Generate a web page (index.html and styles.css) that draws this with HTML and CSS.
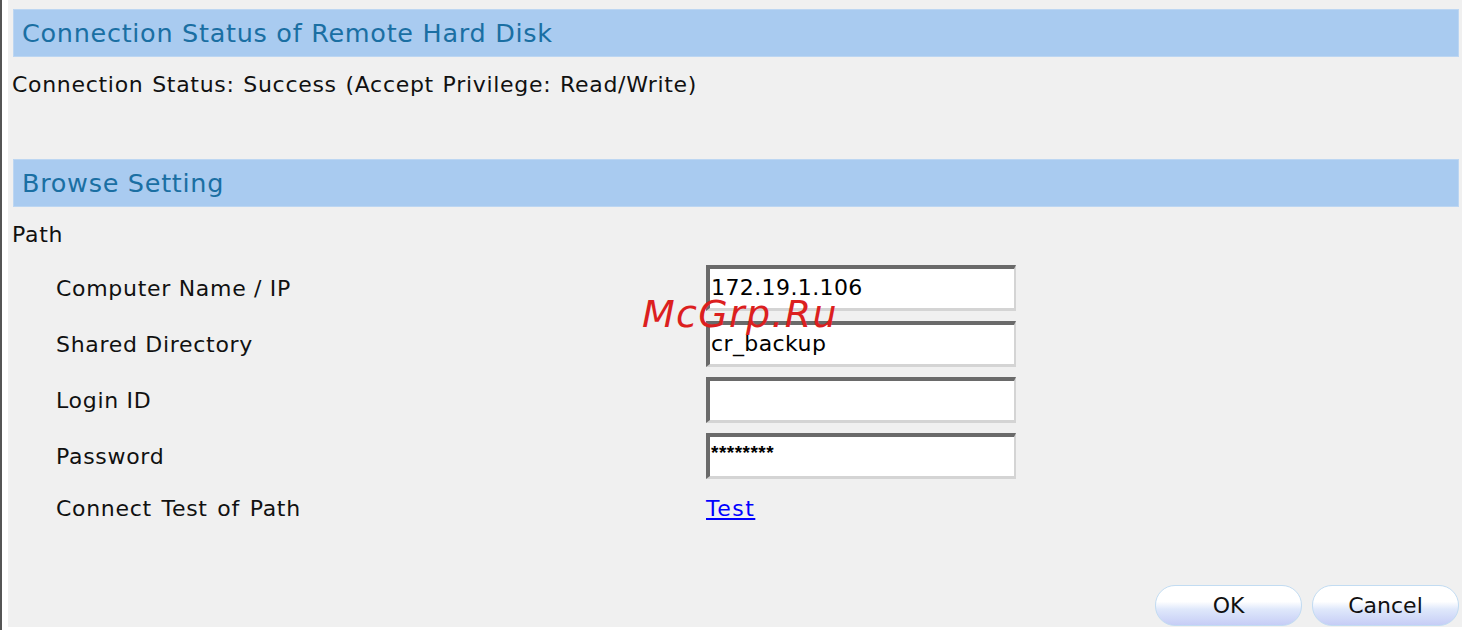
FILE: index.html
```html
<!DOCTYPE html>
<html>
<head>
<meta charset="utf-8">
<link rel="stylesheet" href="styles.css">
</head>
<body>
<div class="frame">
  <div class="panel">
    <div class="section-head">Connection Status of Remote Hard Disk</div>
    <div class="status">Connection Status: Success (Accept Privilege: Read/Write)</div>
    <div class="section-head">Browse Setting</div>
    <div class="path">Path</div>
    <div class="form">
      <div class="row"><span class="label">Computer Name / IP</span><div class="field">172.19.1.106</div></div>
      <div class="row"><span class="label">Shared Directory</span><div class="field">cr_backup</div></div>
      <div class="row"><span class="label">Login ID</span><div class="field"></div></div>
      <div class="row"><span class="label">Password</span><div class="field pw">********</div></div>
      <div class="row short"><span class="label wide">Connect Test of Path</span><a class="link" href="#">Test</a></div>
    </div>
    <div class="buttons">
      <button class="btn">OK</button>
      <button class="btn">Cancel</button>
    </div>
  </div>
  <div class="watermark">McGrp.Ru</div>
</div>
</body>
</html>
```
FILE: styles.css
```css
html, body {
  margin: 0;
  padding: 0;
  background: #ffffff;
}
.frame {
  position: relative;
  width: 1467px;
  height: 630px;
  border-left: 2px solid #555555;
  box-sizing: border-box;
  padding-left: 6px;
  font-family: "DejaVu Sans", Verdana, sans-serif;
  font-size: 22px;
  letter-spacing: 0.7px;
  color: #111111;
}
.panel {
  width: 1454px;
  height: 627px;
  background: #f0f0f0;
  box-sizing: border-box;
  padding: 9px 3px 0 5px;
  display: flex;
  flex-direction: column;
}
.section-head {
  height: 48px;
  box-sizing: border-box;
  background: #a9cbf0;
  border: 1px solid #bcd6f2;
  color: #1a6fa3;
  font-size: 25.5px;
  line-height: 46px;
  padding-left: 8px;
}
.status {
  height: 102px;
  box-sizing: border-box;
  padding: 15px 0 0 0;
  line-height: 26px;
  margin-left: -1px;
  word-spacing: 1px;
}
.path {
  line-height: 26px;
  margin-top: 15px;
  margin-left: -1px;
}
.form {
  margin-top: 12px;
  display: flex;
  flex-direction: column;
}
.row {
  height: 56px;
  display: grid;
  grid-template-columns: 650px 310px;
  align-items: center;
  padding-left: 43px;
}
.row.short {
  height: 48px;
}
.label.wide {
  word-spacing: 2px;
}
.field {
  height: 46px;
  box-sizing: border-box;
  background: #ffffff;
  border-top: 4px solid #6a6a6a;
  border-left: 4px solid #6a6a6a;
  border-right: 2px solid #d4d4d4;
  border-bottom: 3px solid #d4d4d4;
  font-size: 22px;
  letter-spacing: 0.4px;
  line-height: 38px;
  padding-left: 1px;
  color: #000;
}
.field.pw {
  font-family: "Liberation Sans", Arial, sans-serif;
  font-weight: bold;
  font-size: 19px;
  letter-spacing: 0.5px;
  line-height: 32px;
}
.link {
  color: #0000ff;
  text-decoration: underline;
  justify-self: start;
  letter-spacing: 1.5px;
}
.buttons {
  margin-top: auto;
  margin-bottom: 1px;
  display: flex;
  justify-content: flex-end;
  gap: 10px;
}
.btn {
  width: 147px;
  height: 41px;
  border-radius: 20px;
  border: 1px solid #c2dcf2;
  background: linear-gradient(#ffffff 0%, #ffffff 40%, #dfe8fb 60%, #c6cdf6 100%);
  font-family: "DejaVu Sans", Verdana, sans-serif;
  font-size: 22px;
  color: #111;
  padding: 0;
}
.watermark {
  position: absolute;
  left: 640px;
  top: 292px;
  font-family: "DejaVu Sans", sans-serif;
  font-style: italic;
  font-size: 38px;
  color: #dc1f1f;
  letter-spacing: 1.3px;
}
```
